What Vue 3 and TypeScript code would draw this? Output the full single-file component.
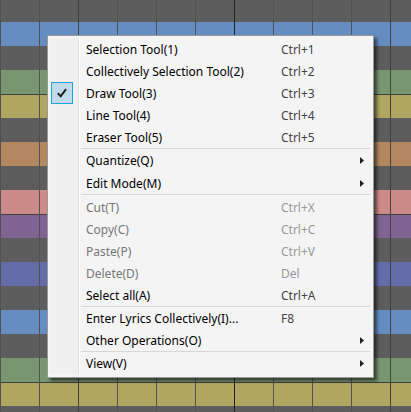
<script setup lang="ts">
interface Item {
  label: string
  keys?: string
  checked?: boolean
  disabled?: boolean
  submenu?: boolean
}

const lanes: string[] = [
  'rest', 'blue', 'rest', 'green', 'yellow octave', 'rest', 'orange', 'rest', 'pink',
  'purple octave', 'rest', 'indigo', 'rest', 'blue', 'rest', 'green', 'yellow octave', 'rest',
]

const groups: Item[][] = [
  [
    { label: 'Selection Tool(1)', keys: 'Ctrl+1' },
    { label: 'Collectively Selection Tool(2)', keys: 'Ctrl+2' },
    { label: 'Draw Tool(3)', keys: 'Ctrl+3', checked: true },
    { label: 'Line Tool(4)', keys: 'Ctrl+4' },
    { label: 'Eraser Tool(5)', keys: 'Ctrl+5' },
  ],
  [
    { label: 'Quantize(Q)', submenu: true },
    { label: 'Edit Mode(M)', submenu: true },
  ],
  [
    { label: 'Cut(T)', keys: 'Ctrl+X', disabled: true },
    { label: 'Copy(C)', keys: 'Ctrl+C', disabled: true },
    { label: 'Paste(P)', keys: 'Ctrl+V', disabled: true },
    { label: 'Delete(D)', keys: 'Del', disabled: true },
    { label: 'Select all(A)', keys: 'Ctrl+A' },
  ],
  [
    { label: 'Enter Lyrics Collectively(I)...', keys: 'F8' },
    { label: 'Other Operations(O)', submenu: true },
  ],
  [{ label: 'View(V)', submenu: true }],
]
</script>

<template>
  <main class="editor">
    <div class="roll" aria-hidden="true">
      <div v-for="(lane, i) in lanes" :key="i" class="lane" :class="lane"></div>
      <div class="beats"></div>
    </div>
    <div class="menu" role="menu">
      <div v-for="(group, g) in groups" :key="g" class="group" role="group">
        <button
          v-for="item in group"
          :key="item.label"
          type="button"
          class="item"
          :role="item.checked ? 'menuitemcheckbox' : 'menuitem'"
          :aria-checked="item.checked"
          :aria-haspopup="item.submenu ? 'menu' : undefined"
          :disabled="item.disabled"
        >
          <span class="mark">
            <span v-if="item.checked" class="tick">
              <svg width="10" height="10" viewBox="0 0 10 10">
                <path d="M0.8 5.2 L3.7 8.2 L9.1 1.2" fill="none" stroke="#212121" stroke-width="2" />
              </svg>
            </span>
          </span>
          <span class="label">{{ item.label }}</span>
          <span class="keys">{{ item.keys }}</span>
          <svg v-if="item.submenu" class="arrow" width="4" height="8" viewBox="0 0 4 8">
            <path d="M0 1 L4 4.5 L0 8 Z" fill="#212121" />
          </svg>
        </button>
      </div>
    </div>
  </main>
</template>

<style>
body {
  margin: 0;
  background: #5d5d5d;
}
</style>

<style scoped>
.editor {
  position: relative;
  box-sizing: border-box;
  min-height: 100vh;
  padding: 35px 37px 34px 47px;
  overflow: hidden;
  font-family: "Noto Sans", "Open Sans", sans-serif;
  font-size: 12px;
}

.roll {
  position: absolute;
  inset: 0;
  overflow: hidden;
}

.lane {
  box-sizing: border-box;
  height: 24px;
}

.lane:first-child {
  height: 22px;
}

.rest { background: #5d5d5d; }
.blue { background: #658dc1; }
.green { background: #78966f; }
.yellow { background: #aea661; }
.orange { background: #b38861; }
.pink { background: #cc8a88; }
.purple { background: #806493; }
.indigo { background: #646ca9; }

.octave {
  border-top: 1px solid #3f3f3f;
}

.beats {
  position: absolute;
  inset: 0;
  background:
    linear-gradient(#222, #222) 234px 0 / 1px 100% no-repeat,
    repeating-linear-gradient(90deg, transparent 0 78px, #414141 78px 79px, transparent 79px 156px),
    repeating-linear-gradient(90deg, #525252 0 1px, transparent 1px 39px);
}

.menu {
  position: relative;
  padding: 2px 2px 3px;
  border: 1px solid #999;
  background:
    linear-gradient(90deg, #f4f4f4 0 2px, #f0f0f0 2px 30px, #e0e0e0 30px 31px, #fff 31px 32px, #f4f4f4 32px)
    0 2px / 100% calc(100% - 5px) no-repeat #f4f4f4;
  box-shadow: 3px 3px 3px rgba(0, 0, 0, 0.55);
}

.group {
  display: flex;
  flex-direction: column;
}

.group + .group::before {
  content: "";
  height: 1px;
  margin: 0 1px 0 31px;
  background: #d7d7d7;
}

.group:nth-child(2) {
  gap: 1px;
}

.group:nth-child(2)::before {
  margin-bottom: -1px;
}

.group:nth-child(3)::before {
  margin-bottom: 1px;
}

.item {
  display: grid;
  grid-template-columns: 36px 1fr 79px 4px;
  align-items: center;
  height: 22px;
  padding: 0 7px 0 0;
  border: 0;
  background: none;
  color: #000;
  font: inherit;
  line-height: 20px;
  text-align: left;
  white-space: nowrap;
}

.label,
.keys {
  padding-top: 2px;
}

.keys {
  color: #444;
}

.item:disabled {
  color: #777;
}

.item:disabled .keys {
  color: #999;
}

.mark {
  height: 22px;
  padding-left: 1px;
}

.tick {
  display: flex;
  align-items: center;
  justify-content: center;
  box-sizing: border-box;
  width: 22px;
  height: 22px;
  border: 1px solid #26a0da;
  background: #c0dceb;
}

.arrow {
  display: block;
}
</style>
